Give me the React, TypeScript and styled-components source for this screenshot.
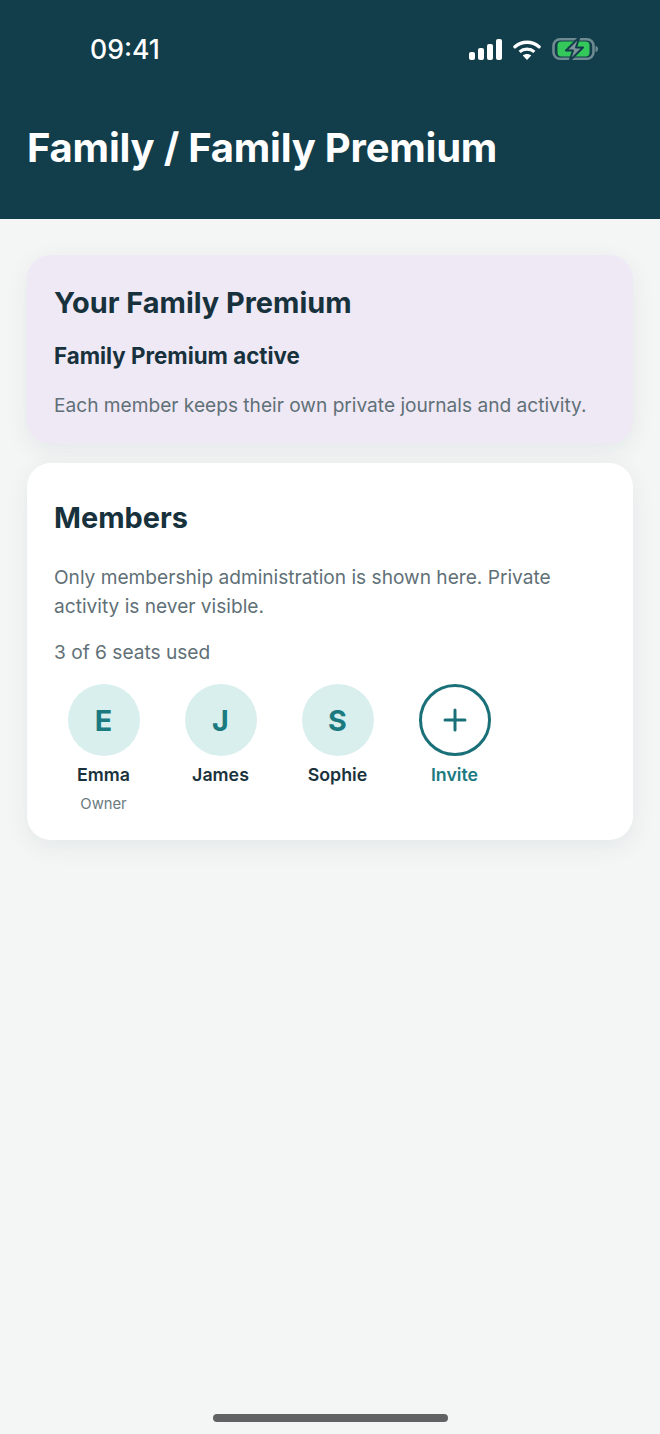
import React from "react";
import styled, { createGlobalStyle } from "styled-components";

const Global = createGlobalStyle`
  html, body { margin: 0; padding: 0; }
  body { background: #f4f6f5; font-family: Inter, "Liberation Sans", sans-serif; }
`;

const Page = styled.div`
  width: 660px;
  height: 1434px;
  display: flex;
  flex-direction: column;
  background: #f4f6f5;
  overflow: hidden;
`;
const Header = styled.header`
  height: 219px;
  box-sizing: border-box;
  background: #123d4a;
  color: #fff;
  display: flex;
  flex-direction: column;
`;
const StatusBar = styled.div`
  height: 48px;
  margin-top: 25px;
  padding: 0 62px 0 90px;
  display: flex;
  align-items: center;
  justify-content: space-between;
`;
const Time = styled.div`
  font-size: 26.6px;
  font-weight: 500;
  line-height: 48px;
`;
const StatusIcons = styled.div`
  display: flex;
  align-items: center;
  gap: 11px;
`;
const Title = styled.h1`
  margin: 50px 0 0 27px;
  font-size: 40px;
  line-height: 50px;
  font-weight: 650;
  letter-spacing: -0.22px;
  white-space: nowrap;
`;
const Content = styled.main`
  flex: 1;
  padding: 36px 27px 0;
  display: flex;
  flex-direction: column;
  gap: 19px;
`;
const Card = styled.section<{ $tint?: boolean }>`
  border-radius: 24px;
  padding: ${(p) => (p.$tint ? "27px 27px 24px" : "34px 27px 24px")};
  background: ${(p) => (p.$tint ? "#efe8f5" : "#ffffff")};
  box-shadow: 0 7px 24px rgba(18, 61, 74, 0.07);
`;
const CardTitle = styled.h2`
  margin: 0;
  font-size: 28.9px;
  line-height: 42px;
  font-weight: 650;
  color: #17323c;
`;
const Subhead = styled.div`
  margin-top: 17px;
  font-size: 22.3px;
  line-height: 30px;
  font-weight: 700;
  color: #17323c;
`;
const Body = styled.p<{ $top: number }>`
  margin: ${(p) => p.$top}px 0 0;
  font-size: 19.13px;
  line-height: 29px;
  color: #5f7077;
`;
const Members = styled.div`
  margin: 17px 0 0 -9px;
  display: flex;
`;
const Member = styled.div`
  width: 117px;
  display: flex;
  flex-direction: column;
  align-items: center;
`;
const Avatar = styled.div`
  width: 72px;
  height: 72px;
  border-radius: 50%;
  background: #d8efee;
  color: #1a7a7f;
  display: flex;
  align-items: center;
  justify-content: center;
  font-size: 28.7px;
  font-weight: 700;
`;
const InviteCircle = styled.div`
  width: 72px;
  height: 72px;
  box-sizing: border-box;
  border-radius: 50%;
  border: 3px solid #1a7078;
  display: flex;
  align-items: center;
  justify-content: center;
`;
const Name = styled.div<{ $accent?: boolean }>`
  margin-top: 6px;
  font-size: 17.8px;
  line-height: 26px;
  font-weight: 600;
  color: ${(p) => (p.$accent ? "#1a7a7f" : "#1a323c")};
`;
const Role = styled.div`
  margin-top: 4px;
  font-size: 14.8px;
  line-height: 24px;
  color: #6b7a80;
`;
const HomeBar = styled.div`
  width: 235px;
  height: 8px;
  border-radius: 4px;
  margin: 0 auto 12px;
  background: #5f6363;
`;

const Signal = () => (
  <svg width="33" height="21" viewBox="0 0 33 21">
    <g fill="#fff">
      <rect x="0" y="13" width="6" height="8" rx="2" />
      <rect x="9" y="9" width="6" height="12" rx="2" />
      <rect x="18" y="5" width="6" height="16" rx="2" />
      <rect x="27" y="0" width="6" height="21" rx="2" />
    </g>
  </svg>
);
const Wifi = () => (
  <svg width="28" height="21" viewBox="0 0 28 21">
    <path d="M14 21l-4.2-4.6c2.4-2 6-2 8.400 0z" fill="#fff" />
    <path d="M6.600 12.900C10.800 9.300 17.200 9.300 21.400 12.900" fill="none" stroke="#fff" strokeWidth="3.200" />
    <path d="M2 7.800C8.900 1.700 19.100 1.700 26 7.800" fill="none" stroke="#fff" strokeWidth="3.400" strokeLinecap="round" />
  </svg>
);
const Battery = () => (
  <svg width="46" height="26" viewBox="0 0 46 26">
    <rect x="1.500" y="3.300" width="40" height="19.400" rx="6.500" fill="none" stroke="#6f8b92" strokeWidth="2.600" />
    <rect x="5.500" y="5.500" width="32" height="15" rx="4" fill="#34c759" />
    <path d="M43.500 10c1.700.3 2.500 1.300 2.500 3s-.8 2.700-2.500 3z" fill="#6f8b92" />
    <path
      d="M27.500 1L14 14.500H21L17.500 25L31 11.500H24z"
      fill="#7f959b"
      stroke="#123d4a"
      strokeWidth="2"
      strokeLinejoin="round"
    />
  </svg>
);
const Plus = () => (
  <svg width="24" height="24" viewBox="0 0 24 24">
    <path d="M12 2V22M2 12H22" stroke="#1a7078" strokeWidth="3" strokeLinecap="round" fill="none" />
  </svg>
);

const people = [
  { initial: "E", name: "Emma", role: "Owner" },
  { initial: "J", name: "James" },
  { initial: "S", name: "Sophie" },
];

export default function App() {
  return (
    <Page>
      <Global />
      <Header>
        <StatusBar>
          <Time>09:41</Time>
          <StatusIcons>
            <Signal />
            <Wifi />
            <Battery />
          </StatusIcons>
        </StatusBar>
        <Title>Family / Family Premium</Title>
      </Header>
      <Content>
        <Card $tint>
          <CardTitle>Your Family Premium</CardTitle>
          <Subhead>Family Premium active</Subhead>
          <Body $top={20}>Each member keeps their own private journals and activity.</Body>
        </Card>
        <Card>
          <CardTitle>Members</CardTitle>
          <Body $top={24}>
            Only membership administration is shown here. Private activity is never visible.
          </Body>
          <Body $top={17}>3 of 6 seats used</Body>
          <Members>
            {people.map((p) => (
              <Member key={p.name}>
                <Avatar>{p.initial}</Avatar>
                <Name>{p.name}</Name>
                {p.role && <Role>{p.role}</Role>}
              </Member>
            ))}
            <Member>
              <InviteCircle>
                <Plus />
              </InviteCircle>
              <Name $accent>Invite</Name>
            </Member>
          </Members>
        </Card>
      </Content>
      <HomeBar />
    </Page>
  );
}
